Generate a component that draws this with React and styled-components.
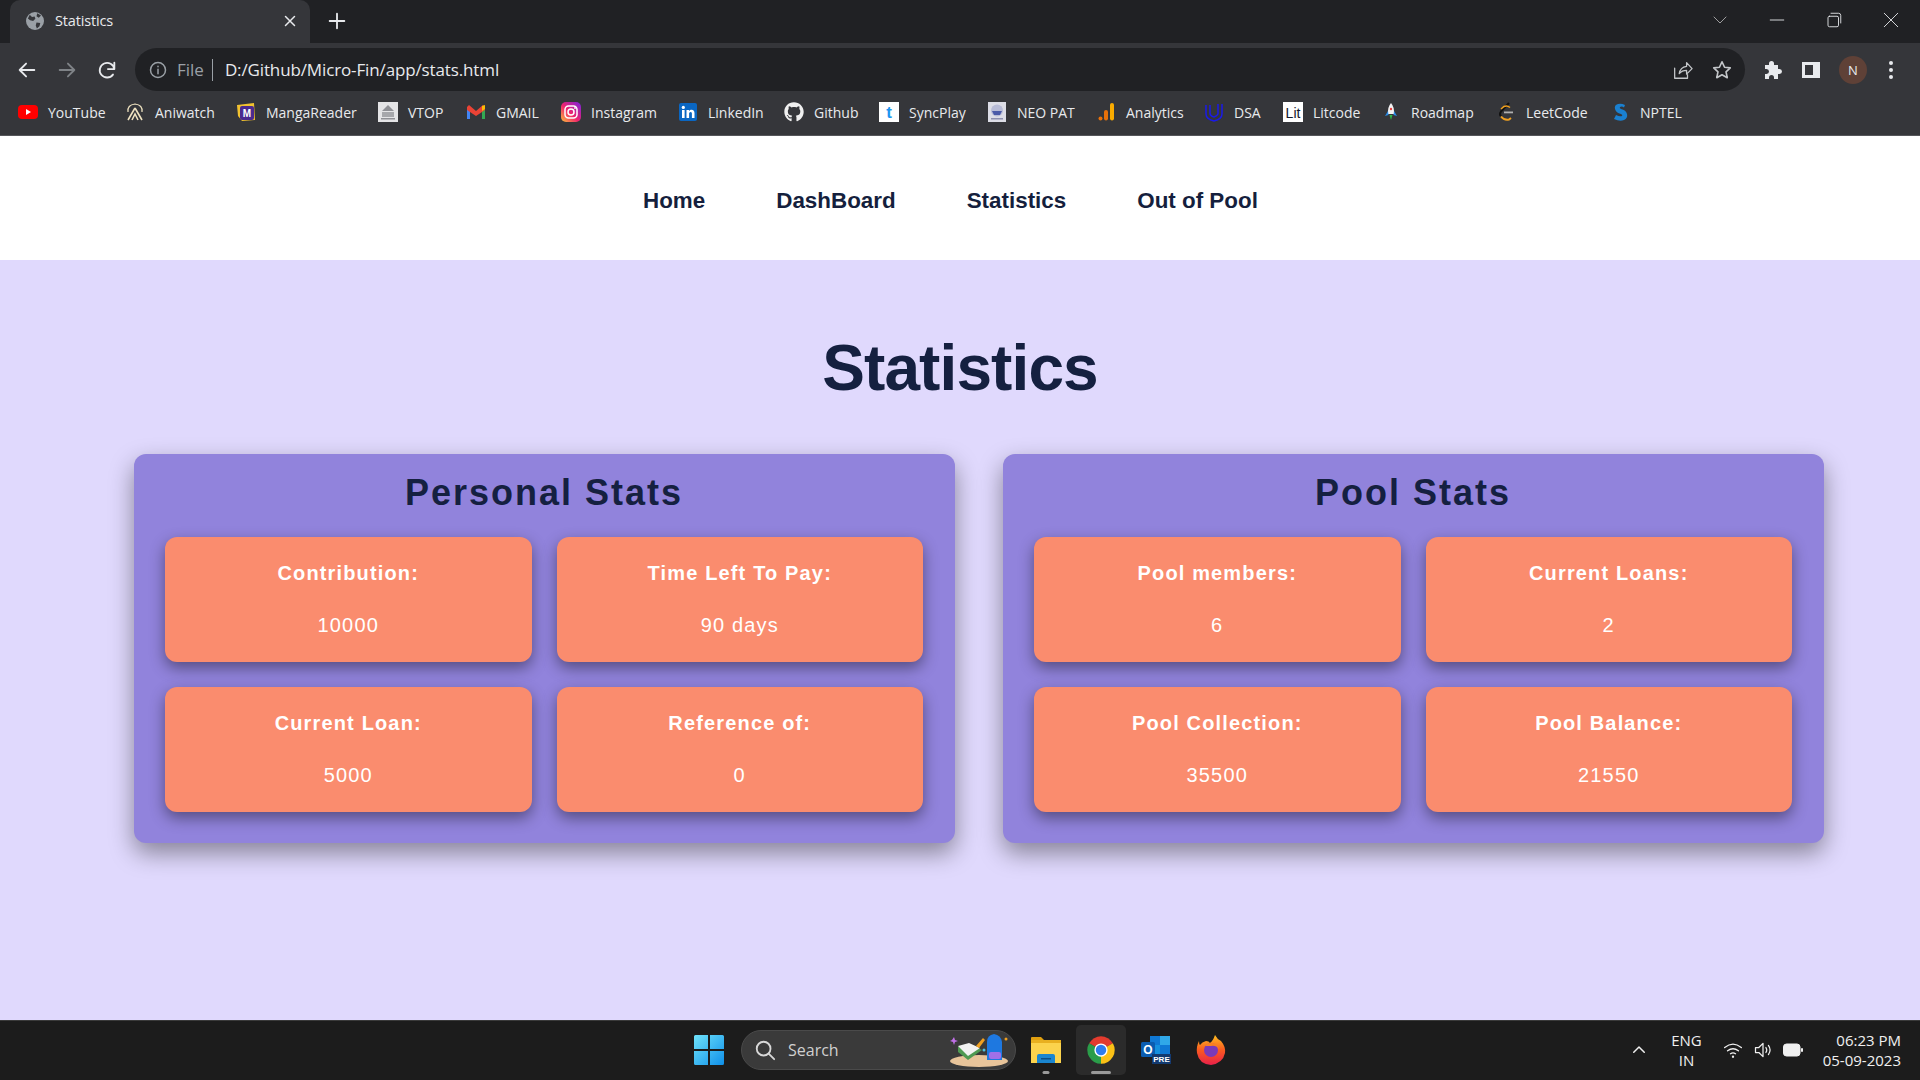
import React from "react";
import styled, { createGlobalStyle } from "styled-components";
import { FaGithub } from "react-icons/fa";

const GlobalStyle = createGlobalStyle`
  html, body {
    margin: 0;
    padding: 0;
    overflow: hidden;
  }
  * { box-sizing: border-box; }
`;

const uiFont = `"Open Sans", "Noto Sans", sans-serif`;
const pageFont = `"Liberation Sans", Arial, sans-serif`;

const Screen = styled.div`
  width: 1920px;
  height: 1080px;
  display: flex;
  flex-direction: column;
  overflow: hidden;
  background: #e0d9fd;
`;

/* browser chrome */
const TabStrip = styled.div`
  height: 43px;
  flex: none;
  display: flex;
  align-items: stretch;
  padding-left: 10px;
  background: #202124;
`;
const Tab = styled.div`
  width: 300px;
  display: flex;
  align-items: center;
  padding: 0 11px 2px 16px;
  background: #35363a;
  border-radius: 10px 10px 0 0;
  color: #e8eaed;
  font: 14.5px ${uiFont};
  letter-spacing: -0.15px;
  svg { flex: none; }
`;
const TabTitle = styled.span`
  flex: 1;
  margin-left: 11px;
`;
const NewTab = styled.div`
  width: 28px;
  margin-left: 13px;
  display: flex;
  align-items: center;
  justify-content: center;
  padding-bottom: 2px;
`;
const WindowButtons = styled.div`
  margin-left: auto;
  display: flex;
  align-items: center;
  padding: 0 1px 4px 0;
`;
const WindowButton = styled.div`
  width: 57px;
  display: flex;
  justify-content: center;
`;

const Toolbar = styled.div`
  height: 48px;
  flex: none;
  display: flex;
  align-items: center;
  background: #35363a;
  padding: 5px 16px 0 16px;
`;
const NavIcons = styled.div`
  width: 119px;
  display: flex;
  align-items: center;
  gap: 18px;
`;
const Omnibox = styled.div`
  width: 1610px;
  height: 43px;
  display: flex;
  align-items: center;
  padding: 0 12px 0 14px;
  background: #202124;
  border-radius: 22px;
  font: 17px ${uiFont};
`;
const FileChip = styled.span`
  color: #9aa0a6;
  margin-left: 10px;
  padding-right: 8px;
  border-right: 1px solid #9aa0a6;
  line-height: 22px;
`;
const Url = styled.span`
  color: #e8eaed;
  margin-left: 12px;
  letter-spacing: -0.13px;
`;
const OmniActions = styled.div`
  margin-left: auto;
  display: flex;
  align-items: center;
  gap: 18px;
`;
const ToolActions = styled.div`
  display: flex;
  align-items: center;
  margin-left: 18px;
  gap: 18px;
`;
const Avatar = styled.div`
  width: 28px;
  height: 28px;
  border-radius: 50%;
  background: #5f4137;
  color: #e8eaed;
  font: 13px ${uiFont};
  display: flex;
  align-items: center;
  justify-content: center;
`;
const Kebab = styled.div`
  display: flex;
  margin-left: 3px;
`;

const BookmarkBar = styled.div`
  height: 45px;
  flex: none;
  display: flex;
  align-items: center;
  padding: 0 0 2px 18px;
  background: #35363a;
  border-bottom: 1px solid #55565a;
`;
const Bookmark = styled.div`
  width: ${(p) => p.$w}px;
  flex: none;
  display: flex;
  align-items: center;
  gap: 10px;
  color: #e8eaed;
  font: 14px ${uiFont};
  white-space: nowrap;
  svg { flex: none; }
`;

/* page */
const Nav = styled.nav`
  height: 124px;
  flex: none;
  display: flex;
  align-items: center;
  gap: 71px;
  padding: 6px 0 0 643px;
  background: #fff;
`;
const NavLink = styled.a`
  color: #151f3d;
  font: bold 22.4px ${pageFont};
`;
const Main = styled.main`
  flex: 1;
  padding: 0 96px 0 134px;
`;
const Title = styled.h1`
  margin: 70px 0 0 -38px;
  height: 124px;
  text-align: center;
  color: #152040;
  font: bold 64px/76px ${pageFont};
  letter-spacing: -0.9px;
`;
const Panels = styled.div`
  display: grid;
  grid-template-columns: 821px 821px;
  gap: 48px;
`;
const Panel = styled.section`
  height: 389px;
  padding: 16px 32px 31px 31px;
  background: #9183dc;
  border-radius: 12px;
  box-shadow: 0 10px 25px rgba(0, 0, 0, 0.4);
`;
const PanelTitle = styled.h2`
  margin: 0 0 22px;
  height: 45px;
  text-align: center;
  color: #152040;
  font: bold 36px/45px ${pageFont};
  letter-spacing: 2px;
`;
const CardGrid = styled.div`
  display: grid;
  grid-template-columns: 1fr 1fr;
  grid-auto-rows: 125px;
  gap: 25px;
`;
const Card = styled.div`
  padding-top: 24px;
  text-align: center;
  color: #fff;
  background: #fa8c6e;
  border-radius: 12px;
  box-shadow: 0 6px 15px rgba(0, 0, 0, 0.42);
  font: 20px/24px ${pageFont};
  letter-spacing: 1.15px;
`;
const CardLabel = styled.div`
  font-weight: bold;
  margin-bottom: 28px;
`;

/* taskbar */
const Taskbar = styled.footer`
  height: 60px;
  flex: none;
  display: flex;
  align-items: center;
  padding: 0 19px 2px 694px;
  background: #1c1c1c;
  border-top: 1px solid #3a3a3a;
`;
const SearchPill = styled.div`
  width: 275px;
  height: 40px;
  margin-left: 17px;
  display: flex;
  align-items: center;
  padding-left: 12px;
  gap: 12px;
  background: #3a3a3a;
  border: 1px solid #4a4a4a;
  border-radius: 20px;
  color: #d0d0d0;
  font: 16px ${uiFont};
`;
const PillArt = styled.div`
  margin-left: auto;
  margin-right: 4px;
  display: flex;
`;
const AppSlot = styled.div`
  position: relative;
  width: 50px;
  height: 50px;
  margin-left: 5px;
  display: flex;
  align-items: center;
  justify-content: center;
  border-radius: 5px;
  background: ${(p) => (p.$active ? "#2b2b2b" : "transparent")};
`;
const RunningMark = styled.span`
  position: absolute;
  left: 50%;
  bottom: 1px;
  transform: translateX(-50%);
  width: ${(p) => (p.$active ? 20 : 7)}px;
  height: 3px;
  border-radius: 2px;
  background: #9a9a9a;
`;
const Tray = styled.div`
  margin-left: auto;
  display: flex;
  align-items: center;
  color: #f0f0f0;
  font: 15px/20px ${uiFont};
`;
const TrayLang = styled.div`
  margin: 0 21px 0 23px;
  text-align: center;
`;
const TrayIcons = styled.div`
  display: flex;
  align-items: center;
  gap: 10px;
`;
const Clock = styled.div`
  margin-left: 20px;
  text-align: right;
`;

/* icons */
const Line = ({ size = 20, color = "#e8eaed", w = 2, box = 24, children }) => (
  <svg width={size} height={size} viewBox={`0 0 ${box} ${box}`} fill="none" stroke={color} strokeWidth={w} strokeLinecap="round" strokeLinejoin="round">
    {children}
  </svg>
);

const Globe = () => (
  <svg width="18" height="18" viewBox="0 0 24 24">
    <circle cx="12" cy="12" r="12" fill="#9aa0a6" />
    <path d="M5 3.5l3 3 3.5-.5 1 3-3 3-4-1-3-2.5zM14 14l5 .5-1 4.5-3.5 3-1.5-4zM15 1.5l5 3-3 3-3-2z" fill="#35363a" />
  </svg>
);

const Fav = ({ children }) => (
  <svg width="20" height="20" viewBox="0 0 20 20">
    {children}
  </svg>
);

const favicons = {
  youtube: (
    <Fav>
      <rect x="0" y="3" width="20" height="14" rx="4" fill="#f00" />
      <path d="M8 7l5 3-5 3z" fill="#fff" />
    </Fav>
  ),
  aniwatch: (
    <Fav>
      <path d="M10 6L3 18M10 6l7 12M7 18l3-6 3 6" stroke="#eee2c0" strokeWidth="1.6" fill="none" />
      <path d="M3 10Q2 3 10 2q8 1 7 8" stroke="#eee2c0" strokeWidth="1.2" fill="none" />
    </Fav>
  ),
  manga: (
    <Fav>
      <path d="M1 3l17-2 1 17-13 1-4-5z" fill="#f2c230" />
      <rect x="4" y="4" width="14" height="14" rx="2" fill="#4b2a8f" />
      <text x="11" y="15" fontSize="10" fontWeight="700" fill="#fff" textAnchor="middle" fontFamily="Liberation Sans">M</text>
    </Fav>
  ),
  vtop: (
    <Fav>
      <rect width="20" height="20" fill="#e4e4e6" />
      <path d="M10 3l6 6H4z" fill="#8f9095" />
      <rect x="4" y="10" width="12" height="5" fill="#a6a7ab" />
      <rect x="3" y="16" width="14" height="1.5" fill="#8f9095" />
    </Fav>
  ),
  gmail: (
    <Fav>
      <path d="M1 17V5l3 2v10z" fill="#4285f4" />
      <path d="M19 17V5l-3 2v10z" fill="#34a853" />
      <path d="M1 5l2-2 7 6 7-6 2 2v3l-9 6-9-6z" fill="#ea4335" />
      <path d="M16 4l3-1v4l-3 2z" fill="#fbbc04" />
    </Fav>
  ),
  instagram: (
    <Fav>
      <defs>
        <linearGradient id="ig" x1="0" y1="1" x2="1" y2="0">
          <stop offset="0" stopColor="#fdc13a" />
          <stop offset=".45" stopColor="#f0246c" />
          <stop offset="1" stopColor="#7a22e0" />
        </linearGradient>
      </defs>
      <rect width="20" height="20" rx="5" fill="url(#ig)" />
      <rect x="4" y="4" width="12" height="12" rx="3.5" fill="none" stroke="#fff" strokeWidth="1.5" />
      <circle cx="10" cy="10" r="3" fill="none" stroke="#fff" strokeWidth="1.5" />
      <circle cx="14" cy="6" r=".9" fill="#fff" />
    </Fav>
  ),
  linkedin: (
    <Fav>
      <rect x="1" y="1" width="18" height="18" rx="2" fill="#0a66c2" />
      <rect x="4" y="8" width="2.6" height="8" fill="#fff" />
      <circle cx="5.3" cy="5.4" r="1.6" fill="#fff" />
      <path d="M8.5 8H11v1.2c.6-1 1.6-1.4 2.6-1.4 2 0 2.9 1.3 2.9 3.5V16h-2.6v-4.2c0-1-.3-1.8-1.3-1.8s-1.5.8-1.5 1.8V16H8.5z" fill="#fff" />
    </Fav>
  ),
  github: <FaGithub size={20} color="#f0f0f0" />,
  syncplay: (
    <Fav>
      <rect width="20" height="20" fill="#fff" />
      <text x="10" y="16" fontSize="17" fontWeight="700" fill="#1e96f0" textAnchor="middle" fontFamily="Liberation Sans">t</text>
    </Fav>
  ),
  neopat: (
    <Fav>
      <rect x="1" width="18" height="20" fill="#dcdde6" />
      <circle cx="10" cy="8.5" r="6" fill="#b7bbd6" />
      <path d="M5 9h10l-2 4H7z" fill="#4a5aa8" />
      <rect x="4" y="16" width="12" height="1.5" fill="#8d90b0" />
    </Fav>
  ),
  analytics: (
    <Fav>
      <circle cx="4.5" cy="16.5" r="2" fill="#e8710a" />
      <rect x="8" y="8" width="4" height="10.5" rx="2" fill="#e8710a" />
      <rect x="14" y="1" width="4" height="17.5" rx="2" fill="#f9ab00" />
    </Fav>
  ),
  dsa: (
    <Fav>
      <path d="M2 3v9q0 5 8 7 8-2 8-7V2M6 3v8q0 3 4 4 3-1 4-3V2" fill="none" stroke="#1a1ae8" strokeWidth="1.5" />
    </Fav>
  ),
  litcode: (
    <Fav>
      <rect width="20" height="20" fill="#fff" />
      <text x="10" y="15.5" fontSize="14" fill="#14182a" textAnchor="middle" fontFamily="Liberation Sans">Lit</text>
    </Fav>
  ),
  roadmap: (
    <Fav>
      <path d="M10 1q3.5 4 3 11H7q-.5-7 3-11z" fill="#f2f2f2" />
      <path d="M7 9l-3 5 3.5-1zM13 9l3 5-3.500-1z" fill="#2a8ce8" />
      <circle cx="10" cy="7" r="1.2" fill="#e84040" />
      <path d="M8.500 13h3L10 18z" fill="#2fb84a" />
    </Fav>
  ),
  leetcode: (
    <Fav>
      <path d="M13 1L5 9.500q-2 2.500 0 5" stroke="#111" strokeWidth="2" fill="none" />
      <path d="M5 14.500q3 4 8 3l2-1.500" stroke="#f0a020" strokeWidth="2" fill="none" />
      <path d="M5 7l3-2.500q3-1.500 6 1" stroke="#f0a020" strokeWidth="1.500" fill="none" />
      <rect x="8" y="9.500" width="9" height="1.800" fill="#b0b0b0" />
    </Fav>
  ),
  nptel: (
    <Fav>
      <path d="M15 3q-4-2-7-1-4 1-3 5t6 5q2 1 1 2-2 1-6-1l-2 4q6 3 10 1 4-2 3-6t-6-5q-2-1-1-2 2-1 4 .5z" fill="#1a80d0" />
    </Fav>
  ),
};

const bookmarks = [
  { label: "YouTube", icon: "youtube", w: 107 },
  { label: "Aniwatch", icon: "aniwatch", w: 111 },
  { label: "MangaReader", icon: "manga", w: 142 },
  { label: "VTOP", icon: "vtop", w: 88 },
  { label: "GMAIL", icon: "gmail", w: 95 },
  { label: "Instagram", icon: "instagram", w: 117 },
  { label: "LinkedIn", icon: "linkedin", w: 106 },
  { label: "Github", icon: "github", w: 95 },
  { label: "SyncPlay", icon: "syncplay", w: 108 },
  { label: "NEO PAT", icon: "neopat", w: 109 },
  { label: "Analytics", icon: "analytics", w: 108 },
  { label: "DSA", icon: "dsa", w: 79 },
  { label: "Litcode", icon: "litcode", w: 98 },
  { label: "Roadmap", icon: "roadmap", w: 115 },
  { label: "LeetCode", icon: "leetcode", w: 114 },
  { label: "NPTEL", icon: "nptel", w: 90 },
];

const navItems = ["Home", "DashBoard", "Statistics", "Out of Pool"];

const panels = [
  {
    title: "Personal Stats",
    cards: [
      ["Contribution:", "10000"],
      ["Time Left To Pay:", "90 days"],
      ["Current Loan:", "5000"],
      ["Reference of:", "0"],
    ],
  },
  {
    title: "Pool Stats",
    cards: [
      ["Pool members:", "6"],
      ["Current Loans:", "2"],
      ["Pool Collection:", "35500"],
      ["Pool Balance:", "21550"],
    ],
  },
];

const WindowsLogo = () => (
  <svg width="30" height="30" viewBox="0 0 30 30">
    <defs>
      <linearGradient id="win" x1="0" y1="0" x2="1" y2="1">
        <stop offset="0" stopColor="#6fe3fb" />
        <stop offset="1" stopColor="#0f8fe8" />
      </linearGradient>
    </defs>
    <path d="M0 1.500Q0 0 1.500 0H14v14H0zM16 0h12.500Q30 0 30 1.500V14H16zM0 16h14v14H1.500Q0 30 0 28.500zM16 16h14v12.500Q30 30 28.500 30H16z" fill="url(#win)" />
  </svg>
);

const SearchArt = () => (
  <svg width="62" height="36" viewBox="0 0 62 36">
    <path d="M3 8l2-3 1 3 3 1-3 1-1 3-1-3-3-1z" fill="#c070e8" />
    <ellipse cx="30" cy="29" rx="29" ry="6" fill="#e8c49a" />
    <path d="M9 15l12-3 12 6-14 10-10-8z" fill="#4f9a52" />
    <path d="M9 14l11-3 11 5-12 8z" fill="#f2f2f2" />
    <path d="M27 14l7-8 2 2-6 8z" fill="#f0a020" />
    <circle cx="35" cy="18" r="1.500" fill="#50c0e0" />
    <path d="M38 28V10q0-7 7-8 7 1 8 8v18z" fill="#1e78e0" />
    <rect x="40" y="20" width="12" height="7" rx="2" fill="#a070e8" />
    <circle cx="57" cy="7" r="1.500" fill="#f0a020" />
  </svg>
);

const ChromeLogo = () => (
  <svg width="30" height="30" viewBox="0 0 24 24">
    <path d="M12 12L2.500 6.500A11 11 0 0 1 21.500 6.500z" fill="#e33b2e" />
    <path d="M12 12L21.500 6.500A11 11 0 0 1 12 23z" fill="#fbc116" />
    <path d="M12 12L12 23A11 11 0 0 1 2.500 6.500z" fill="#2a9d49" />
    <circle cx="12" cy="12" r="5.300" fill="#fff" />
    <circle cx="12" cy="12" r="4.200" fill="#2f7ded" />
  </svg>
);

const ExplorerLogo = () => (
  <svg width="30" height="30" viewBox="0 0 30 30">
    <path d="M0 3q0-1 1-1h9l3 3h-13z" fill="#e0a010" />
    <rect y="5" width="30" height="23" fill="#fbd34d" />
    <rect y="5" width="30" height="3" fill="#e8b020" />
    <path d="M6 28v-7q0-2 2-2h14q2 0 2 2v7z" fill="#1a86d0" />
    <rect x="10" y="23" width="10" height="1.500" fill="#0a4f88" />
  </svg>
);

const OutlookLogo = () => (
  <svg width="30" height="30" viewBox="0 0 30 30">
    <rect x="9" y="1" width="20" height="18" fill="#0f78d4" />
    <rect x="19" y="1" width="10" height="9" fill="#30a8e8" />
    <rect x="9" y="10" width="10" height="9" fill="#1490df" />
    <rect x="0" y="7" width="14" height="15" rx="1.500" fill="#0a5cb0" />
    <text x="7" y="19" fontSize="12" fontWeight="700" fill="#fff" textAnchor="middle" fontFamily="Liberation Sans">O</text>
    <rect x="11" y="19" width="19" height="10" fill="#123a70" />
    <text x="20.500" y="27" fontSize="8" fontWeight="700" fill="#fff" textAnchor="middle" fontFamily="Liberation Sans">PRE</text>
  </svg>
);

const FirefoxLogo = () => (
  <svg width="30" height="30" viewBox="0 0 30 30">
    <defs>
      <linearGradient id="fx" x1="0.500" y1="0" x2="0.500" y2="1">
        <stop offset="0" stopColor="#ffc020" />
        <stop offset=".5" stopColor="#fa5a20" />
        <stop offset="1" stopColor="#e8204a" />
      </linearGradient>
    </defs>
    <path d="M19 0q2 4 6 6 5 6 4 12-2 10-14 12Q3 29 1 18 0 12 3 6q0 3 1 4 2-3 6-4 3 0 4 2 3-2 5-8z" fill="url(#fx)" />
    <circle cx="15" cy="15" r="7" fill="#7a3ab8" />
    <path d="M9 11q3-4 8-3 5 1 6 6-3-4-8-3-3 0-6 0z" fill="#fa8020" />
  </svg>
);

function App() {
  return (
    <Screen>
      <GlobalStyle />
      <TabStrip>
        <Tab>
          <Globe />
          <TabTitle>Statistics</TabTitle>
          <Line size={18}>
            <path d="M6 6l12 12M18 6L6 18" />
          </Line>
        </Tab>
        <NewTab>
          <Line size={22}>
            <path d="M12 4v16M4 12h16" />
          </Line>
        </NewTab>
        <WindowButtons>
          <WindowButton>
            <Line size={18} w={1} color="#c8c8c8">
              <path d="M4 8l8 8 8-8" />
            </Line>
          </WindowButton>
          <WindowButton>
            <Line size={18} w={1.200}>
              <path d="M3 12h18" />
            </Line>
          </WindowButton>
          <WindowButton>
            <Line size={18} w={1.200}>
              <rect x="4" y="7" width="14" height="14" rx="2" />
              <path d="M8 3h10a3 3 0 0 1 3 3v10" />
            </Line>
          </WindowButton>
          <WindowButton>
            <Line size={18} w={1.200}>
              <path d="M3 3l18 18M21 3L3 21" />
            </Line>
          </WindowButton>
        </WindowButtons>
      </TabStrip>

      <Toolbar>
        <NavIcons>
          <Line size={22}>
            <path d="M20 12H4M11 5l-7 7 7 7" />
          </Line>
          <Line size={22} color="#7f8387">
            <path d="M4 12h16M13 5l7 7-7 7" />
          </Line>
          <Line size={22}>
            <path d="M20 11a8 8 0 1 0-1.500 6M20 4v7h-7" />
          </Line>
        </NavIcons>
        <Omnibox>
          <Line size={18} color="#9aa0a6">
            <circle cx="12" cy="12" r="10" />
            <path d="M12 11v6M12 7v.5" />
          </Line>
          <FileChip>File</FileChip>
          <Url>D:/Github/Micro-Fin/app/stats.html</Url>
          <OmniActions>
            <Line size={22} w={1.400} color="#c4c7ca">
              <path d="M4 10v11h14v-4M9 16q1-7 8-8V4l6 6.500-6 6V12.500q-5 0-8 3.500z" />
            </Line>
            <Line size={22} w={1.800} color="#c4c7ca">
              <path d="M12 3l2.800 6 6.200.7-4.600 4.300 1.300 6.400L12 17.200 6.300 20.400 7.600 14 3 9.700 9.200 9z" />
            </Line>
          </OmniActions>
        </Omnibox>
        <ToolActions>
          <svg width="20" height="20" viewBox="0 0 20 20">
            <path d="M2 5h4V3.500a2.500 2.500 0 0 1 5 0V5h4v4h1.500a2.500 2.500 0 0 1 0 5H15v5h-4v-1.500a2.500 2.500 0 0 0-5 0V19H2v-5h1.500a2.500 2.500 0 0 0 0-5H2z" fill="#e8eaed" />
          </svg>
          <svg width="20" height="20" viewBox="0 0 20 20">
            <path d="M1 2h18v16H1zM4 5v10h8V5z" fill="#e8eaed" fillRule="evenodd" />
          </svg>
          <Avatar>N</Avatar>
          <Kebab>
            <svg width="6" height="20" viewBox="0 0 6 20">
              <circle cx="3" cy="3" r="2" fill="#e8eaed" />
              <circle cx="3" cy="10" r="2" fill="#e8eaed" />
              <circle cx="3" cy="17" r="2" fill="#e8eaed" />
            </svg>
          </Kebab>
        </ToolActions>
      </Toolbar>

      <BookmarkBar>
        {bookmarks.map((b) => (
          <Bookmark key={b.label} $w={b.w}>
            {favicons[b.icon]}
            <span>{b.label}</span>
          </Bookmark>
        ))}
      </BookmarkBar>

      <Nav>
        {navItems.map((item) => (
          <NavLink key={item}>{item}</NavLink>
        ))}
      </Nav>

      <Main>
        <Title>Statistics</Title>
        <Panels>
          {panels.map((panel) => (
            <Panel key={panel.title}>
              <PanelTitle>{panel.title}</PanelTitle>
              <CardGrid>
                {panel.cards.map(([label, value]) => (
                  <Card key={label}>
                    <CardLabel>{label}</CardLabel>
                    <div>{value}</div>
                  </Card>
                ))}
              </CardGrid>
            </Panel>
          ))}
        </Panels>
      </Main>

      <Taskbar>
        <WindowsLogo />
        <SearchPill>
          <Line size={22} w={2} color="#d8d8d8">
            <circle cx="10.500" cy="10.500" r="7.500" />
            <path d="M16 16l6 6" />
          </Line>
          Search
          <PillArt>
            <SearchArt />
          </PillArt>
        </SearchPill>
        <AppSlot>
          <ExplorerLogo />
          <RunningMark />
        </AppSlot>
        <AppSlot $active>
          <ChromeLogo />
          <RunningMark $active />
        </AppSlot>
        <AppSlot>
          <OutlookLogo />
        </AppSlot>
        <AppSlot>
          <FirefoxLogo />
        </AppSlot>
        <Tray>
          <Line size={18} w={2} color="#f0f0f0">
            <path d="M5 15l7-7 7 7" />
          </Line>
          <TrayLang>
            ENG
            <br />
            IN
          </TrayLang>
          <TrayIcons>
            <Line size={20} w={1.600} color="#f0f0f0">
              <path d="M2 9q10-8 20 0M5.500 13q6.500-5 13 0M9 16.500q3-2 6 0" />
              <circle cx="12" cy="20" r=".6" />
            </Line>
            <Line size={20} w={1.500} color="#f0f0f0">
              <path d="M3 9v6h4l5 5V4L7 9zM15.500 9q2 3 0 6M18.500 6.500q4 5.500 0 11" />
            </Line>
            <svg width="20" height="14" viewBox="0 0 20 14">
              <rect x=".5" y="1" width="16.500" height="12" rx="3" fill="#f0f0f0" stroke="#f0f0f0" />
              <rect x="18" y="5" width="2" height="4" rx="1" fill="#f0f0f0" />
            </svg>
          </TrayIcons>
          <Clock>
            06:23 PM
            <br />
            05-09-2023
          </Clock>
        </Tray>
      </Taskbar>
    </Screen>
  );
}

export default App;
